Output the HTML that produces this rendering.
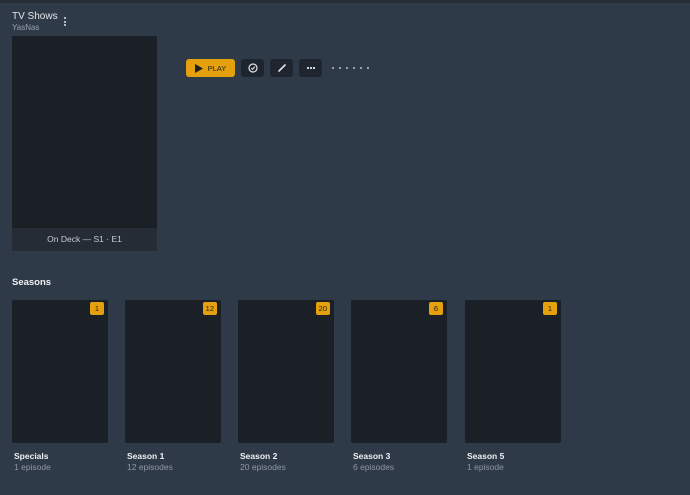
<!DOCTYPE html>
<html><head><style>
*{margin:0;padding:0;box-sizing:border-box}
body{width:690px;height:495px;background:#2f3a48;font-family:"Liberation Sans",sans-serif;position:relative;overflow:hidden}
.top{position:absolute;left:0;top:0;width:690px;height:3px;background:#262d37}
.a{position:absolute}
.t1{left:12px;top:11px;font-size:10px;color:#e4e6e9}
.t2{left:12px;top:23px;font-size:8px;color:#9aa3ad}
.kebab{left:64px;top:17px;width:3px}
.kebab i{display:block;width:2px;height:2px;background:#dfe2e5;margin-bottom:1.5px;border-radius:1px}
.poster{left:12px;top:36px;width:145px;height:192px;background:#1b1f26}
.deck{left:12px;top:228px;width:145px;height:23px;background:#262c35;color:#c9cdd2;font-size:8.5px;text-align:center;line-height:23px}
.btn{top:59px;height:18px;background:#1f252e;border-radius:3px;display:flex;align-items:center;justify-content:center}
.play{left:186px;width:49px;background:#e5a00d;color:#1d1f22;font-size:7.5px;gap:5px}
.dots{left:332px;top:67px}
.dots i{display:inline-block;width:1.5px;height:1.5px;background:#9aa3ad;margin-right:5.5px;vertical-align:top}
.sh{left:12px;top:277px;font-size:9.5px;font-weight:bold;color:#eef0f2}
.card{top:300px;width:96px;height:143px;background:#1b1f26;border-radius:2px}
.badge{position:absolute;right:4px;top:2px;min-width:14px;height:13px;padding:0 3px;background:#e5a00d;border-radius:2px;font-size:7.5px;color:#1d1f22;text-align:center;line-height:13px}
.ct{top:451px;font-size:8.5px;font-weight:bold;color:#eef0f2}
.cs{top:462px;font-size:8.5px;color:#8e98a3}
</style></head><body>
<div class="top"></div>
<div class="a t1">TV Shows</div>
<div class="a t2">YasNas</div>
<div class="a kebab"><i></i><i></i><i></i></div>
<div class="a poster"></div>
<div class="a deck">On Deck — S1 · E1</div>
<div class="a btn play"><svg width="8" height="9" viewBox="0 0 8 9"><path d="M0 0L8 4.5L0 9Z" fill="#1d1f22"/></svg>PLAY</div>
<div class="a btn" style="left:241px;width:23px"><svg width="10" height="10" viewBox="0 0 10 10"><circle cx="5" cy="5" r="4" fill="none" stroke="#e4e6e9" stroke-width="1.2"/><path d="M3.3 5.2L4.5 6.3L6.8 3.6" fill="none" stroke="#e4e6e9" stroke-width="1.1"/></svg></div>
<div class="a btn" style="left:270px;width:23px"><svg width="10" height="10" viewBox="0 0 10 10"><path d="M2 8L8 2" stroke="#e4e6e9" stroke-width="1.6" stroke-linecap="round"/></svg></div>
<div class="a btn" style="left:299px;width:23px"><svg width="10" height="4" viewBox="0 0 10 4"><circle cx="2" cy="2" r="1.1" fill="#e4e6e9"/><circle cx="5" cy="2" r="1.1" fill="#e4e6e9"/><circle cx="8" cy="2" r="1.1" fill="#e4e6e9"/></svg></div>
<div class="a dots"><i></i><i></i><i></i><i></i><i></i><i></i></div>
<div class="a sh">Seasons</div>
<div class="a card" style="left:12px"><div class="badge">1</div></div>
<div class="a card" style="left:125px"><div class="badge">12</div></div>
<div class="a card" style="left:238px"><div class="badge">20</div></div>
<div class="a card" style="left:351px"><div class="badge">6</div></div>
<div class="a card" style="left:465px"><div class="badge">1</div></div>
<div class="a ct" style="left:14px">Specials</div><div class="a cs" style="left:14px">1 episode</div>
<div class="a ct" style="left:127px">Season 1</div><div class="a cs" style="left:127px">12 episodes</div>
<div class="a ct" style="left:240px">Season 2</div><div class="a cs" style="left:240px">20 episodes</div>
<div class="a ct" style="left:353px">Season 3</div><div class="a cs" style="left:353px">6 episodes</div>
<div class="a ct" style="left:467px">Season 5</div><div class="a cs" style="left:467px">1 episode</div>
</body></html>
